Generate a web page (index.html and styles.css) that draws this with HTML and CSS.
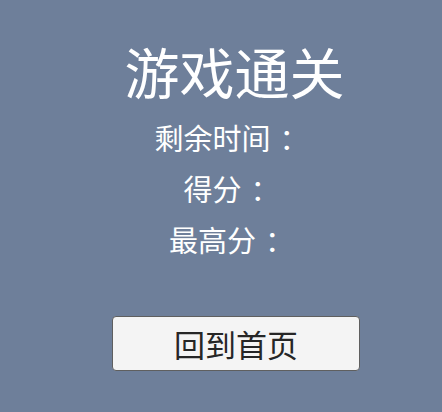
FILE: index.html
```html
<!DOCTYPE html>
<html lang="zh-CN">
<head>
<meta charset="utf-8">
<title>游戏通关</title>
<link rel="stylesheet" href="styles.css">
</head>
<body>
<div class="screen">
  <h1 class="title">游戏通关</h1>
  <div class="stats">
    <p class="stat">剩余时间<span class="colon">：</span></p>
    <p class="stat">得分<span class="colon">：</span></p>
    <p class="stat">最高分<span class="colon">：</span></p>
  </div>
  <button class="home-btn">回到首页</button>
</div>
</body>
</html>
```
FILE: styles.css
```css
html, body {
  margin: 0;
  padding: 0;
}
body {
  background: #6e7f9a;
  width: 442px;
  height: 412px;
  overflow: hidden;
  font-family: "Noto Sans CJK SC", "Noto Sans", sans-serif;
}
.screen {
  display: flex;
  flex-direction: column;
  align-items: center;
  padding-left: 27px;
  padding-top: 36px;
}
.title {
  margin: 0;
  font-size: 55px;
  font-weight: 400;
  line-height: 68px;
  color: #ffffff;
}
.stats {
  display: flex;
  flex-direction: column;
  align-items: center;
  margin-right: 15px;
  margin-top: 8px;
}
.stat {
  margin: 0;
  font-size: 29px;
  line-height: 51px;
  color: #ffffff;
}
.colon {
  display: inline-block;
  width: 1em;
  box-sizing: border-box;
  padding-left: 9px;
}
.home-btn {
  margin-top: 51px;
  margin-left: 3px;
  width: 248px;
  height: 55px;
  background: #f4f4f4;
  border: 1px solid #5f5f5f;
  border-radius: 4px;
  font-family: "Noto Sans CJK SC", "Noto Sans", sans-serif;
  font-size: 31px;
  color: #262626;
  padding: 0;
}
```
